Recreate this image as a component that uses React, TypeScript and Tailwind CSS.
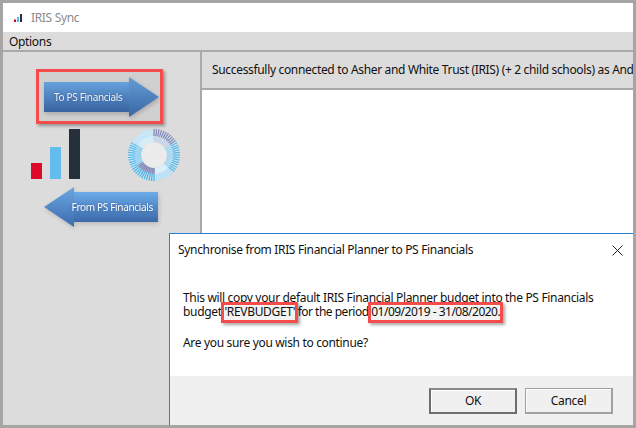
const font = "font-['Noto_Sans','Open_Sans',sans-serif] tracking-[-0.33px]"

function Ring() {
  const ticks = Array.from({ length: 64 }, (_, i) => i)
  const colors = (deg: number) => {
    if (deg < 60) return ["#8487b0", "#c8d4e8"]
    if (deg < 130) return ["#5ab5e3", "#aad8f1"]
    if (deg < 180) return ["#addbf4", "#dceef9"]
    if (deg < 240) return ["#4ab2e4", "#8a8eb6"]
    if (deg < 300) return ["#55bcec", "#95d2f1"]
    return ["#bde4f7", "#d6edf9"]
  }
  return (
    <svg width="54" height="54" viewBox="-27 -27 54 54">
      <circle r="19" fill="none" stroke="#d8eaf5" strokeWidth="12" />
      {ticks.map((i) => {
        const deg = (i / 64) * 360
        const a = (deg * Math.PI) / 180
        const s = Math.sin(a)
        const c = -Math.cos(a)
        const [outer, inner] = colors(deg)
        return (
          <g key={i}>
            <line x1={s * 13} y1={c * 13} x2={s * 19} y2={c * 19} stroke={inner} strokeWidth="1.6" />
            <line x1={s * 19} y1={c * 19} x2={s * 26} y2={c * 26} stroke={outer} strokeWidth="1.3" />
          </g>
        )
      })}
      <circle r="12.5" fill="#ececec" />
    </svg>
  )
}

function RightArrow() {
  return (
    <div className="flex items-center h-10 drop-shadow-[1px_2px_2px_rgba(0,0,0,0.2)]">
      <div className="w-[85px] h-[30px] flex items-center pl-[10px] text-[10px] whitespace-nowrap text-white [text-shadow:0_0_2px_rgba(30,60,110,0.6)] bg-gradient-to-b from-[#6cabe9] to-[#3c69a9]">
        To PS Financials
      </div>
      <div className="w-[30px] h-10 bg-gradient-to-b from-[#6ba7e2] to-[#3d6cae] [clip-path:polygon(0_0,100%_50%,0_100%)]" />
    </div>
  )
}

function LeftArrow() {
  return (
    <div className="flex items-center h-10 drop-shadow-[1px_2px_2px_rgba(0,0,0,0.15)]">
      <div className="w-[30px] h-10 bg-gradient-to-b from-[#6ba7e2] to-[#3d6cae] [clip-path:polygon(100%_0,0_50%,100%_100%)]" />
      {/* label runs slightly over the arrow head, clip-path stacks above it otherwise */}
      <div className="relative z-10 w-[84px] h-[30px] flex items-center justify-end pr-[5px] text-[10px] whitespace-nowrap text-white [text-shadow:0_0_2px_rgba(30,60,110,0.6)] bg-gradient-to-b from-[#6cabe9] to-[#3c69a9]">
        From PS Financials
      </div>
    </div>
  )
}

function Highlight({ className }: { className: string }) {
  return (
    <span
      className={`absolute border-[3px] border-[#f44b4b] bg-black/5 shadow-[2px_2px_3px_rgba(0,0,0,0.35)] pointer-events-none ${className}`}
    />
  )
}

export default function App() {
  return (
    <div className={`w-[636px] h-[428px] p-[3px] bg-[#a5a5a5] overflow-hidden ${font}`}>
      <div className="relative w-full h-full flex flex-col bg-white text-[#111] overflow-hidden">
        {/* Title bar */}
        <div className="h-[29px] flex items-center pl-[11px] gap-[9px] shrink-0">
          <svg width="8" height="8" viewBox="0 0 8 8">
            <rect x="0" y="5.5" width="2" height="2.5" fill="#d0021b" />
            <rect x="3" y="3" width="2" height="5" fill="#5cb8e8" />
            <rect x="6" y="0" width="2" height="8" fill="#25303b" />
          </svg>
          <span className="text-[12px] text-[#8a8a8a]">IRIS Sync</span>
        </div>

        {/* Menu */}
        <div className="h-[20px] bg-[#dcdcdc] border-b-2 border-[#a9a9a9] pl-[6px] text-[12px] leading-[19px] shrink-0">
          Options
        </div>

        <div className="flex-1 flex min-h-0">
          {/* Side panel */}
          <div className="relative w-[199px] shrink-0 bg-[#dcdcdc] border-r-2 border-[#a9a9a9] pt-[25px] pl-[41px] flex flex-col">
            <RightArrow />
            <Highlight className="left-[33px] top-[17px] w-[127px] h-[55px]" />
            <div className="flex mt-3 -ml-[13px] h-[58px]">
              <div className="flex items-end gap-2 w-[50px] h-[50px]">
                <div className="w-[11px] h-4 bg-[#dc0a28]" />
                <div className="w-[11px] h-8 bg-[#62bdee]" />
                <div className="w-[11px] h-[50px] bg-[#25303b]" />
              </div>
              <div className="ml-[46px] -mt-[1px]">
                <Ring />
              </div>
            </div>
            <LeftArrow />
          </div>

          {/* Main */}
          <div className="flex-1 min-w-0 flex flex-col">
            <div className="h-[38px] bg-[#dcdcdc] border-b-2 border-[#a9a9a9] flex items-center pl-[10px] text-[12px] whitespace-nowrap overflow-hidden shrink-0">
              Successfully connected to Asher and White Trust (IRIS) (+ 2 child schools) as Andrew
            </div>
            <div className="flex-1 bg-white" />
          </div>
        </div>

        {/* Dialog */}
        <div className="absolute left-[166px] top-[230px] right-0 bottom-0 bg-white border-l border-t border-[#2b7fd0] flex flex-col">
          <div className="flex items-center justify-between h-[30px] pl-2 pr-[8px] text-[12px] mt-[1px] shrink-0">
            <span>Synchronise from IRIS Financial Planner to PS Financials</span>
            <svg width="11" height="11" viewBox="0 0 11 11" stroke="#222" strokeWidth="1" className="mr-[2px]">
              <path d="M0.5 0.5L10.5 10.5M10.5 0.5L0.5 10.5" />
            </svg>
          </div>
          <div className="flex-1 pl-[13px] pt-[26px] text-[12px] leading-[14px]">
            <p>This will copy your default IRIS Financial Planner budget into the PS Financials</p>
            <p>
              budget{" "}
              <span className="relative">
                'REVBUDGET'
                <Highlight className="-left-[3px] -right-[3px] -top-[1px] -bottom-[3px]" />
              </span>
              <span className="tracking-[-0.5px]"> for the period </span>
              <span className="relative tracking-[-0.5px]">
                01/09/2019 - 31/08/2020.
                <Highlight className="-left-[3px] -right-[3px] -top-[1px] -bottom-[3px]" />
              </span>
            </p>
            <p className="mt-[17px]">Are you sure you wish to continue?</p>
          </div>
          <div className="h-[49px] bg-[#f0f0f0] flex justify-end gap-2 pt-3 pr-5 text-[12px] shrink-0">
            <button className="w-[88px] h-[26px] bg-[#f0f0f0] border-2 border-[#6d6d6d] border-t-[#8a8a8a] shadow-[inset_1px_1px_0_#fff]">
              OK
            </button>
            <button className="w-[88px] h-[26px] bg-[#f0f0f0] border border-b-2 border-r-2 border-[#a0a0a0] shadow-[inset_1px_1px_0_#fff]">
              Cancel
            </button>
          </div>
        </div>
      </div>
    </div>
  )
}
